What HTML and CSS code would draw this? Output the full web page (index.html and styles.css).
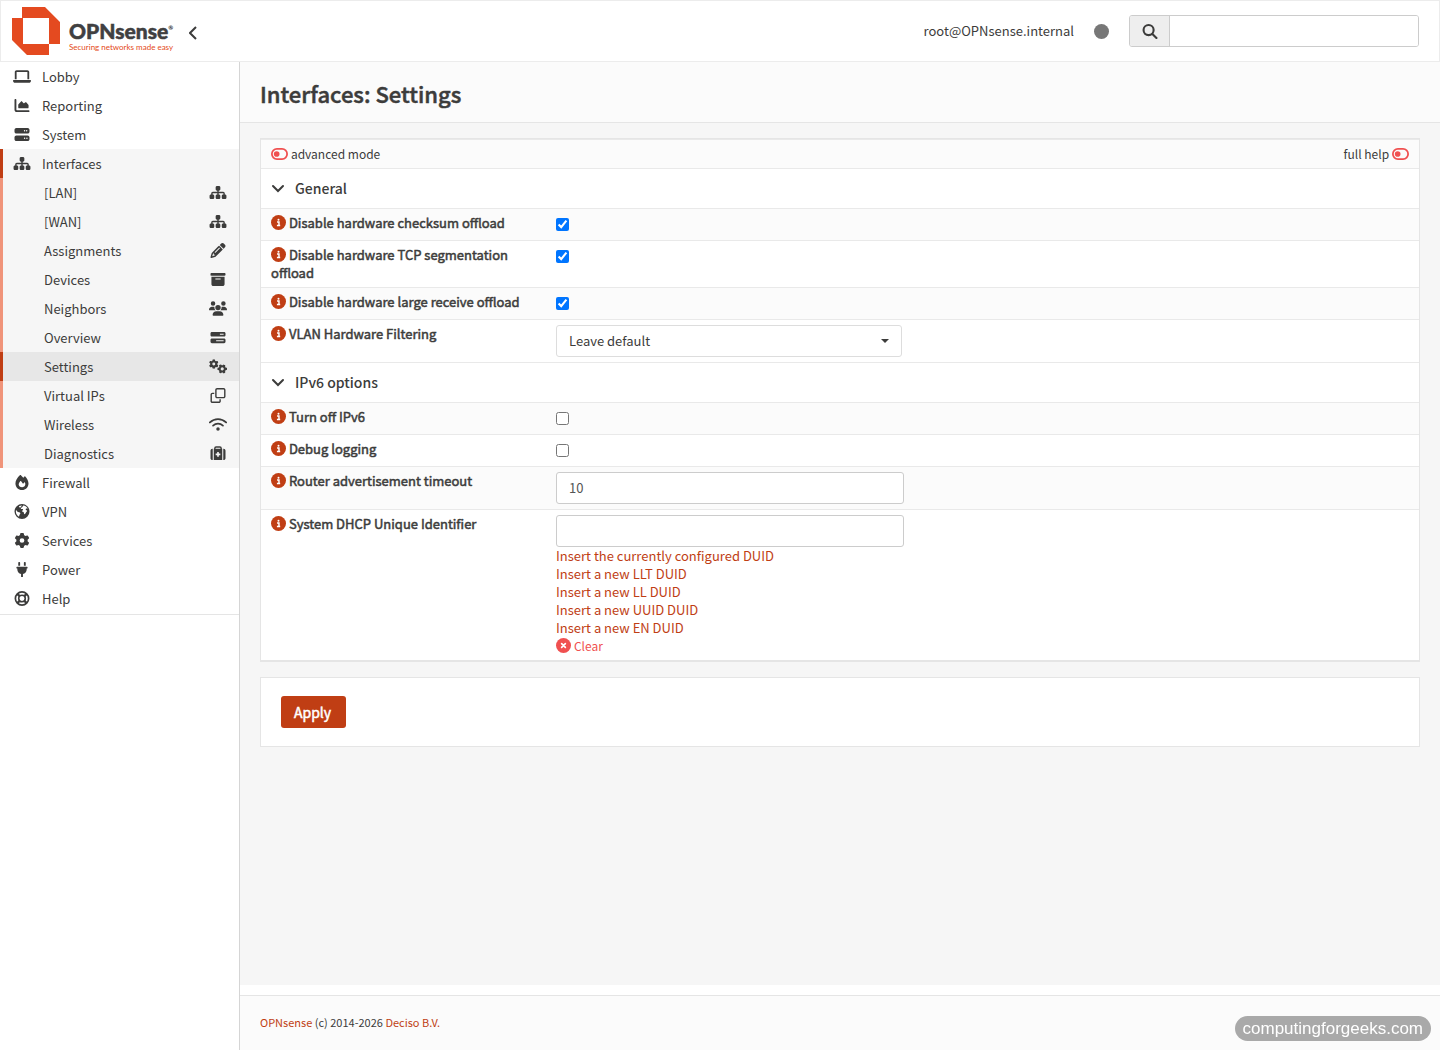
FILE: index.html
```html
<!DOCTYPE html>
<html lang="en">
<head>
    <meta charset="UTF-8">
    <meta name="viewport" content="width=device-width, initial-scale=1.0">
    <title>Settings | Interfaces | OPNsense.internal</title>
    <link rel="stylesheet" href="styles.css">
</head>
<body>
    <!-- icon set -->
    <svg class="sprite" aria-hidden="true">
        <symbol id="laptop" viewBox="0 0 640 512"><path d="M128 32C92.700 32 64 60.700 64 96V352h64V96H512V352h64V96c0-35.300-28.700-64-64-64H128zM19.200 384C8.600 384 0 392.600 0 403.200C0 445.600 34.400 480 76.800 480H563.200c42.400 0 76.800-34.400 76.800-76.800c0-10.600-8.600-19.200-19.200-19.200H19.200z"/></symbol>
        <symbol id="chart" viewBox="0 0 512 512"><path d="M64 64c0-17.700-14.300-32-32-32S0 46.300 0 64V400c0 44.200 35.800 80 80 80H480c17.700 0 32-14.300 32-32s-14.300-32-32-32H80c-8.800 0-16-7.200-16-16V64zm96 288H448c17.700 0 32-14.300 32-32V251.800c0-7.600-2.700-15-7.700-20.800l-65.800-76.800c-12.100-14.200-33.700-15-46.900-1.800l-21 21c-10 10-26.400 9.200-35.400-1.600l-39.200-47c-12.600-15.100-35.700-15.400-48.700-.6L135.900 215c-5.100 5.800-7.900 13.300-7.900 21.100v84c0 17.700 14.300 32 32 32z"/></symbol>
        <symbol id="server" viewBox="0 0 512 512"><path d="M64 32C28.700 32 0 60.700 0 96v64c0 35.300 28.700 64 64 64H448c35.300 0 64-28.700 64-64V96c0-35.300-28.700-64-64-64H64zm280 72a24 24 0 1 1 0 48 24 24 0 1 1 0-48zm48 24a24 24 0 1 1 48 0 24 24 0 1 1 -48 0zM64 288c-35.300 0-64 28.700-64 64v64c0 35.300 28.700 64 64 64H448c35.300 0 64-28.700 64-64V352c0-35.300-28.700-64-64-64H64zm280 72a24 24 0 1 1 0 48 24 24 0 1 1 0-48zm56 24a24 24 0 1 1 48 0 24 24 0 1 1 -48 0z"/></symbol>
        <symbol id="sitemap" viewBox="0 0 576 512"><path d="M208 80c0-26.500 21.500-48 48-48h64c26.500 0 48 21.500 48 48v64c0 26.500-21.500 48-48 48h-8v40H464c30.900 0 56 25.100 56 56v32h8c26.500 0 48 21.500 48 48v64c0 26.500-21.500 48-48 48H464c-26.500 0-48-21.500-48-48V368c0-26.500 21.500-48 48-48h8V288c0-4.400-3.600-8-8-8H312v40h8c26.500 0 48 21.500 48 48v64c0 26.500-21.500 48-48 48H256c-26.500 0-48-21.500-48-48V368c0-26.500 21.500-48 48-48h8V280H112c-4.400 0-8 3.600-8 8v32h8c26.500 0 48 21.500 48 48v64c0 26.500-21.500 48-48 48H48c-26.500 0-48-21.500-48-48V368c0-26.500 21.500-48 48-48h8V288c0-30.900 25.100-56 56-56H264V192h-8c-26.500 0-48-21.500-48-48V80z"/></symbol>
        <symbol id="pencil" viewBox="0 0 512 512"><path d="M410.300 231l11.300-11.300-33.900-33.900-62.100-62.100L291.700 89.800l-11.300 11.300-22.600 22.600L58.600 322.900c-10.400 10.400-18 23.300-22.200 37.400L1 480.700c-2.500 8.400-.2 17.500 6.100 23.700s15.300 8.500 23.700 6.100l120.300-35.400c14.100-4.200 27-11.800 37.400-22.200L387.700 253.700 410.300 231zM160 399.400l-9.100 22.700c-4 3.100-8.500 5.400-13.300 6.900L59.400 452l23-78.100c1.400-4.900 3.800-9.400 6.900-13.300l22.700-9.100v32c0 8.800 7.200 16 16 16h32zM362.700 18.700L348.300 33.200 325.700 55.800 314.300 67.100l33.900 33.900 62.100 62.100 33.900 33.900 11.300-11.300 22.600-22.600 14.500-14.500c25-25 25-65.500 0-90.500L453.300 18.700c-25-25-65.500-25-90.500 0zm-47.400 168l-144 144c-6.200 6.200-16.400 6.200-22.600 0s-6.200-16.400 0-22.600l144-144c6.200-6.200 16.400-6.200 22.600 0s6.200 16.400 0 22.600z"/></symbol>
        <symbol id="archive" viewBox="0 0 512 512"><path d="M32 32H480c17.700 0 32 14.300 32 32V96c0 17.700-14.300 32-32 32H32C14.300 128 0 113.700 0 96V64C0 46.300 14.300 32 32 32zm0 128H480V416c0 35.300-28.700 64-64 64H96c-35.300 0-64-28.700-64-64V160zm128 80c0 8.800 7.200 16 16 16H336c8.800 0 16-7.200 16-16s-7.200-16-16-16H176c-8.800 0-16 7.200-16 16z"/></symbol>
        <symbol id="users" viewBox="0 0 640 512"><path d="M144 0a80 80 0 1 1 0 160A80 80 0 1 1 144 0zM512 0a80 80 0 1 1 0 160A80 80 0 1 1 512 0zM0 298.700C0 239.800 47.800 192 106.700 192h42.700c15.900 0 31 3.500 44.600 9.700c-1.300 7.200-1.900 14.700-1.900 22.300c0 38.200 16.800 72.500 43.300 96H21.300C9.600 320 0 310.400 0 298.700zM404.600 320c26.600-23.500 43.300-57.800 43.300-96c0-7.600-.7-15-1.900-22.300c13.600-6.300 28.700-9.700 44.600-9.700h42.700C592.200 192 640 239.800 640 298.700c0 11.800-9.600 21.300-21.300 21.300H404.600zM224 224a96 96 0 1 1 192 0 96 96 0 1 1 -192 0zM128 485.300C128 411.700 187.700 352 261.300 352H378.700C452.300 352 512 411.700 512 485.300c0 14.700-11.900 26.700-26.700 26.700H154.700c-14.700 0-26.700-11.900-26.700-26.700z"/></symbol>
        <symbol id="progress" viewBox="0 0 512 512"><path d="M448 160H320V128H448v32zM48 64C21.500 64 0 85.500 0 112v64c0 26.500 21.500 48 48 48H464c26.500 0 48-21.500 48-48V112c0-26.500-21.500-48-48-48H48zM448 352v32H192V352H448zM48 288c-26.500 0-48 21.500-48 48v64c0 26.500 21.500 48 48 48H464c26.500 0 48-21.500 48-48V336c0-26.500-21.500-48-48-48H48z" fill-rule="evenodd"/></symbol>
        <symbol id="gear" viewBox="0 0 512 512"><path d="M495.900 166.600c3.200 8.700 .5 18.400-6.400 24.600l-43.300 39.400c1.100 8.300 1.700 16.800 1.700 25.400s-.6 17.100-1.700 25.400l43.300 39.400c6.900 6.200 9.600 15.900 6.400 24.600c-4.400 11.900-9.700 23.300-15.800 34.300l-4.700 8.100c-6.600 11-14 21.400-22.100 31.200c-5.900 7.200-15.700 9.600-24.500 6.800l-55.700-17.700c-13.400 10.300-28.200 18.900-44 25.400l-12.500 57.100c-2 9.100-9 16.300-18.200 17.800c-13.800 2.300-28 3.500-42.500 3.500s-28.700-1.200-42.500-3.500c-9.200-1.500-16.200-8.700-18.200-17.800l-12.500-57.100c-15.800-6.500-30.600-15.100-44-25.400L83.100 425.900c-8.800 2.800-18.600 .3-24.500-6.800c-8.100-9.800-15.500-20.200-22.100-31.200l-4.700-8.100c-6.100-11-11.400-22.400-15.800-34.300c-3.200-8.700-.5-18.400 6.400-24.600l43.300-39.400C64.600 273.100 64 264.600 64 256s.6-17.100 1.700-25.400L22.400 191.200c-6.900-6.200-9.600-15.900-6.400-24.600c4.400-11.900 9.700-23.300 15.800-34.300l4.700-8.100c6.600-11 14-21.400 22.100-31.200c5.900-7.200 15.700-9.600 24.500-6.800l55.700 17.700c13.400-10.300 28.200-18.900 44-25.400l12.500-57.100c2-9.100 9-16.300 18.200-17.800C227.300 1.200 241.500 0 256 0s28.700 1.200 42.500 3.500c9.200 1.500 16.200 8.700 18.200 17.800l12.500 57.100c15.800 6.500 30.600 15.100 44 25.400l55.700-17.700c8.800-2.800 18.600-.3 24.500 6.800c8.100 9.800 15.500 20.200 22.100 31.200l4.700 8.100c6.100 11 11.400 22.400 15.800 34.300zM256 336a80 80 0 1 0 0-160 80 80 0 1 0 0 160z"/></symbol>
        <symbol id="gears" viewBox="0 0 640 512"><use href="#gear" x="0" y="0" width="340" height="340"/><g transform="rotate(30 470 342)"><use href="#gear" x="300" y="172" width="340" height="340"/></g></symbol>
        <symbol id="clone" viewBox="0 0 512 512"><path d="M64 464H288c8.800 0 16-7.200 16-16V384h48v64c0 35.300-28.700 64-64 64H64c-35.300 0-64-28.700-64-64V224c0-35.300 28.700-64 64-64h64v48H64c-8.800 0-16 7.200-16 16V448c0 8.800 7.200 16 16 16zM224 304H448c8.800 0 16-7.200 16-16V64c0-8.800-7.200-16-16-16H224c-8.800 0-16 7.200-16 16V288c0 8.800 7.200 16 16 16zm-64-16V64c0-35.300 28.700-64 64-64H448c35.300 0 64 28.700 64 64V288c0 35.300-28.700 64-64 64H224c-35.300 0-64-28.700-64-64z"/></symbol>
        <symbol id="wifi" viewBox="0 0 640 512"><g fill="none" stroke="currentColor" stroke-width="62" stroke-linecap="round"><path d="M32 184c165-160 411-160 576 0"/><path d="M144 298c102-92 250-92 352 0"/></g><circle cx="320" cy="416" r="62"/></symbol>
        <symbol id="medkit" viewBox="0 0 512 512"><path d="M76 96v384H64c-36 0-64-28-64-64V160c0-36 28-64 64-64zM436 96h12c36 0 64 28 64 64v256c0 36-28 64-64 64h-12zM112 96h288v384H112zm116 112v52h-52v56h52v52h56v-52h52v-56h-52v-52z" fill-rule="evenodd"/><path d="M148 110V76c0-26 18-44 42-44h132c24 0 42 18 42 44v34" fill="none" stroke="currentColor" stroke-width="48"/></symbol>
        <symbol id="fire" viewBox="0 0 512 512"><path d="M190 4c8-7 20-7 28 1 29 28 56 58 81 91 12-15 25-32 40-46 8-7 20-7 28 0 60 58 111 158 111 238 0 126-98 224-222 224S32 414 32 287C32 200 92 92 190 4zm68 412c26 0 48-7 69-21 42-29 54-88 28-136-4-9-16-10-23-2l-26 30c-6 8-18 7-24 0-22-28-49-63-62-80-5-6-14-6-19 0-49 61-58 93-58 120 0 56 50 89 115 89z" fill-rule="evenodd"/></symbol>
        <symbol id="globe" viewBox="0 0 512 512"><path fill-rule="evenodd" d="M256 0a256 256 0 1 1 0 512 256 256 0 1 1 0-512zM54 200c-24 100 18 192 100 236l14-58c4-18 26-28 30-44 6-24-12-44-34-50l-48-12c-26-8-44-38-62-72zM256 48c-40 0-76 10-108 30l20 34c10 18 34 14 42-2l18-28c8-12 24-20 28-34zM296 52l-22 44c-8 16-26 22-40 30-20 12-22 34-6 44 20 12 44-4 60 12 16 20-12 36-24 52-10 16 4 34 24 34 26 0 32 26 34 48 4 32 26 44 44 18l26-44c12-22 36-28 36-56 0-26-38-26-46-48-6-20 14-30 34-30h36C428 98 368 58 296 52z"/></symbol>
        <symbol id="plug" viewBox="0 0 384 512"><path d="M96 0c18 0 32 14 32 32v96H64V32C64 14 78 0 96 0zm192 0c18 0 32 14 32 32v96h-64V32c0-18 14-32 32-32zM32 160h320c18 0 32 14 32 32s-14 32-32 32v32c0 77-55 142-128 157v99h-64v-99C87 398 32 333 32 256v-32c-18 0-32-14-32-32s14-32 32-32z"/></symbol>
        <symbol id="lifering" viewBox="0 0 512 512"><g fill="none" stroke="currentColor"><circle cx="256" cy="256" r="226" stroke-width="58"/><circle cx="256" cy="256" r="112" stroke-width="54"/><path d="M96 96l92 92M416 96l-92 92M96 416l92-92M416 416l-92-92" stroke-width="80"/></g></symbol>
        <symbol id="search" viewBox="0 0 512 512"><g fill="none" stroke="currentColor" stroke-width="72" stroke-linecap="round"><circle cx="208" cy="208" r="172"/><path d="M338 338l138 138"/></g></symbol>
        <symbol id="info" viewBox="0 0 512 512"><circle cx="256" cy="256" r="256"/><circle cx="256" cy="160" r="34" fill="#fff"/><path d="M206 236h66v118M202 360h112" fill="none" stroke="#fff" stroke-width="50"/></symbol>
        <symbol id="clear" viewBox="0 0 512 512"><circle cx="256" cy="256" r="256"/><path d="M192 192l128 128M320 192l-128 128" stroke="#fff" stroke-width="56" stroke-linecap="round"/></symbol>
        <symbol id="toggle" viewBox="0 0 576 400"><rect x="30" y="30" width="516" height="340" rx="170" fill="none" stroke="currentColor" stroke-width="60"/><circle cx="192" cy="200" r="96"/></symbol>
        <symbol id="chevron" viewBox="0 0 14 14"><path d="M2 4l5 5 5-5" fill="none" stroke="currentColor" stroke-width="2" stroke-linecap="round"/></symbol>
    </svg>

    <header class="page-head">
        <a class="brand" href="#">
            <svg class="brand-mark" viewBox="0 0 48 48" aria-hidden="true"><path fill="#e44a20" fill-rule="evenodd" d="M10 0h23l15 15v22H37v11H15L0 33V11h10zM11 11v26h26V11z"/></svg>
            <span class="brand-text">
                <span class="brand-name">OPNsense<sup>®</sup></span>
                <span class="brand-tagline">Securing networks made easy</span>
            </span>
        </a>
        <button class="menu-toggle" type="button" aria-label="Toggle sidebar">
            <svg viewBox="0 0 8 14"><path d="M7 1L1 7l6 6" fill="none" stroke="currentColor" stroke-width="2"/></svg>
        </button>
        <span class="user">root@OPNsense.internal</span>
        <span class="status"></span>
        <form class="search">
            <label for="search-box"><svg class="icon" aria-label="Search"><use href="#search"/></svg></label>
            <input type="text" id="search-box">
        </form>
    </header>

    <div class="page">
        <nav class="sidebar">
            <ul class="menu">
                <li><a href="#"><svg class="icon"><use href="#laptop"/></svg>Lobby</a></li>
                <li><a href="#"><svg class="icon"><use href="#chart"/></svg>Reporting</a></li>
                <li><a href="#"><svg class="icon"><use href="#server"/></svg>System</a></li>
                <li>
                    <a class="open" href="#"><svg class="icon"><use href="#sitemap"/></svg>Interfaces</a>
                    <ul class="submenu">
                        <li><a href="#">[LAN]<svg class="icon"><use href="#sitemap"/></svg></a></li>
                        <li><a href="#">[WAN]<svg class="icon"><use href="#sitemap"/></svg></a></li>
                        <li><a href="#">Assignments<svg class="icon"><use href="#pencil"/></svg></a></li>
                        <li><a href="#">Devices<svg class="icon"><use href="#archive"/></svg></a></li>
                        <li><a href="#">Neighbors<svg class="icon"><use href="#users"/></svg></a></li>
                        <li><a href="#">Overview<svg class="icon"><use href="#progress"/></svg></a></li>
                        <li><a class="active" href="#">Settings<svg class="icon"><use href="#gears"/></svg></a></li>
                        <li><a href="#">Virtual IPs<svg class="icon"><use href="#clone"/></svg></a></li>
                        <li><a href="#">Wireless<svg class="icon"><use href="#wifi"/></svg></a></li>
                        <li><a href="#">Diagnostics<svg class="icon"><use href="#medkit"/></svg></a></li>
                    </ul>
                </li>
                <li><a href="#"><svg class="icon"><use href="#fire"/></svg>Firewall</a></li>
                <li><a href="#"><svg class="icon"><use href="#globe"/></svg>VPN</a></li>
                <li><a href="#"><svg class="icon"><use href="#gear"/></svg>Services</a></li>
                <li><a href="#"><svg class="icon"><use href="#plug"/></svg>Power</a></li>
                <li><a href="#"><svg class="icon"><use href="#lifering"/></svg>Help</a></li>
            </ul>
        </nav>

        <div class="main">
            <div class="title-bar">
                <h1>Interfaces: Settings</h1>
            </div>

            <main class="content">
                <form>
                    <div class="box">
                        <table class="settings">
                            <tr class="modes">
                                <td><a href="#"><svg class="icon"><use href="#toggle"/></svg></a> <small>advanced mode</small></td>
                                <td class="right"><small>full help</small> <a href="#"><svg class="icon"><use href="#toggle"/></svg></a></td>
                            </tr>
                            <tr class="section">
                                <th colspan="2"><svg class="chevron"><use href="#chevron"/></svg>General</th>
                            </tr>
                            <tr class="odd">
                                <td><svg class="info"><use href="#info"/></svg> <label for="checksum">Disable hardware checksum offload</label></td>
                                <td><input type="checkbox" id="checksum" checked></td>
                            </tr>
                            <tr>
                                <td><svg class="info"><use href="#info"/></svg> <label for="tso">Disable hardware TCP segmentation offload</label></td>
                                <td><input type="checkbox" id="tso" checked></td>
                            </tr>
                            <tr class="odd">
                                <td><svg class="info"><use href="#info"/></svg> <label for="lro">Disable hardware large receive offload</label></td>
                                <td><input type="checkbox" id="lro" checked></td>
                            </tr>
                            <tr>
                                <td><svg class="info"><use href="#info"/></svg> <label for="vlan">VLAN Hardware Filtering</label></td>
                                <td>
                                    <div class="select">
                                        <select id="vlan">
                                            <option>Leave default</option>
                                        </select>
                                    </div>
                                </td>
                            </tr>
                            <tr class="section">
                                <th colspan="2"><svg class="chevron"><use href="#chevron"/></svg>IPv6 options</th>
                            </tr>
                            <tr class="odd">
                                <td><svg class="info"><use href="#info"/></svg> <label for="ipv6">Turn off IPv6</label></td>
                                <td><input type="checkbox" id="ipv6"></td>
                            </tr>
                            <tr>
                                <td><svg class="info"><use href="#info"/></svg> <label for="debug">Debug logging</label></td>
                                <td><input type="checkbox" id="debug"></td>
                            </tr>
                            <tr class="odd">
                                <td><svg class="info"><use href="#info"/></svg> <label for="timeout">Router advertisement timeout</label></td>
                                <td><input type="text" id="timeout" value="10"></td>
                            </tr>
                            <tr>
                                <td><svg class="info"><use href="#info"/></svg> <label for="duid">System DHCP Unique Identifier</label></td>
                                <td>
                                    <input type="text" id="duid">
                                    <a class="duid-link" href="#">Insert the currently configured DUID</a>
                                    <a class="duid-link" href="#">Insert a new LLT DUID</a>
                                    <a class="duid-link" href="#">Insert a new LL DUID</a>
                                    <a class="duid-link" href="#">Insert a new UUID DUID</a>
                                    <a class="duid-link" href="#">Insert a new EN DUID</a>
                                    <a class="clear" href="#"><svg class="info"><use href="#clear"/></svg> <small>Clear</small></a>
                                </td>
                            </tr>
                        </table>
                    </div>

                    <div class="box actions">
                        <button class="apply" type="submit">Apply</button>
                    </div>
                </form>
            </main>

            <footer class="page-foot">
                <a href="#">OPNsense</a> (c) 2014-2026 <a href="#">Deciso B.V.</a>
            </footer>
        </div>
    </div>

    <div class="site-badge">computingforgeeks.com</div>
</body>
</html>
```

FILE: styles.css
```css
* {
    box-sizing: border-box;
}

body {
    display: flex;
    flex-direction: column;
    min-height: 100vh;
    margin: 0;
    font-family: "Noto Sans CJK SC", "Noto Sans", sans-serif;
    font-size: 13px;
    line-height: 18px;
    color: #3c3c3b;
    background-color: #fff;
}

a {
    color: #c03e14;
    text-decoration: none;
}

small {
    font-size: 12px;
}

input, select, button {
    font-family: inherit;
    font-size: 13px;
    color: inherit;
}

.sprite {
    position: absolute;
    width: 0;
    height: 0;
}

.icon {
    width: 18px;
    height: 15px;
    fill: currentColor;
}

/* header */
.page-head {
    display: flex;
    align-items: center;
    height: 62px;
    padding: 0 20px 0 11px;
    border: 1px solid #ececec;
}

.brand {
    display: flex;
    align-items: center;
    gap: 9px;
}

.brand-mark {
    width: 48px;
    height: 48px;
}

.brand-text {
    display: flex;
    flex-direction: column;
    gap: 2px;
    padding-top: 10px;
    font-family: Lato, sans-serif;
}

.brand-name {
    font-size: 21px;
    line-height: 20px;
    font-weight: 900;
    color: #404041;
    -webkit-text-stroke: 0.5px currentColor;
}

.brand-name sup {
    font-size: 6px;
    line-height: 0;
    vertical-align: 9px;
    -webkit-text-stroke: 0;
}

.brand-tagline {
    font-size: 8px;
    line-height: 8px;
    color: #e44a20;
}

.menu-toggle {
    display: flex;
    margin: 4px auto 0 16px;
    padding: 0;
    border: none;
    background: none;
    cursor: pointer;
}

.menu-toggle svg {
    width: 8px;
    height: 14px;
}

.status {
    width: 15px;
    height: 15px;
    margin: 0 20px;
    border-radius: 50%;
    background-color: #777;
}

.search {
    display: flex;
    width: 290px;
    height: 32px;
    border: 1px solid #ccc;
    border-radius: 3px;
    overflow: hidden;
}

.search label {
    display: flex;
    align-items: center;
    justify-content: center;
    width: 40px;
    border-right: 1px solid #ccc;
    background-color: #eee;
}

.search input {
    flex: 1;
    min-width: 0;
    border: none;
    outline: none;
}

/* sidebar */
.page {
    display: flex;
    flex: 1;
}

.sidebar {
    flex: 0 0 240px;
    border-right: 1px solid #d5d5d5;
}

.menu, .submenu {
    margin: 0;
    padding: 0;
    list-style: none;
}

.menu {
    padding-bottom: 1px;
    border-bottom: 1px solid #e5e5e5;
}

.menu a {
    display: flex;
    align-items: center;
    height: 29px;
    padding-left: 13px;
    color: #3c3c3b;
}

.menu .icon {
    margin-right: 11px;
}

.menu .open {
    padding-left: 10px;
    border-left: 3px solid #c03e14;
    background-color: #f6f6f6;
}

.submenu a {
    justify-content: space-between;
    padding-left: 41px;
    border-left: 3px solid #f0947a;
    background-color: #f6f6f6;
}

.submenu .active {
    border-left-color: #c03e14;
    background-color: #e7e7e7;
}

.submenu .icon {
    margin-right: 12px;
}

/* content */
.main {
    display: flex;
    flex: 1;
    flex-direction: column;
    min-width: 0;
}

.title-bar {
    padding: 19px 20px 17px;
    border-bottom: 1px solid #e5e5e5;
    background-color: #fbfbfb;
}

h1 {
    margin: 0;
    font-size: 22px;
    line-height: 24px;
    font-weight: 500;
    -webkit-text-stroke: 0.5px currentColor;
}

.content {
    flex: 1;
    padding: 15px 20px;
    background-color: #f6f6f6;
}

.box {
    margin-bottom: 15px;
    border: 1px solid #e5e5e5;
    background-color: #fff;
}

.settings {
    width: 100%;
    border-collapse: separate;
    border-spacing: 0;
    table-layout: fixed;
    border-bottom: 1px solid #e5e5e5;
}

.settings td, .settings th {
    padding: 5px 10px;
    border-top: 1px solid #e9e9e9;
    text-align: left;
    vertical-align: top;
}

.settings td:first-child {
    width: 285px;
}

.settings tr {
    height: 32px;
}

.settings .modes {
    height: 29px;
}

.odd, .modes {
    background-color: #fbfbfb;
}

.settings .right {
    text-align: right;
}

.modes a {
    color: #f05050;
}

.modes .icon {
    width: 17px;
    height: 12px;
    vertical-align: -1px;
}

.settings .section th {
    padding: 10px;
    font-size: 14px;
    font-weight: 500;
    line-height: 19px;
}

.chevron {
    width: 14px;
    height: 14px;
    margin-right: 10px;
    vertical-align: -2px;
}

.info {
    width: 15px;
    height: 15px;
    vertical-align: -2px;
    fill: #c03e14;
}

/* regular weight thickened, keeps its width */
.settings label {
    -webkit-text-stroke: 0.5px currentColor;
}

input[type="checkbox"] {
    display: block;
    width: 13px;
    height: 13px;
    margin: 4px 0 0;
}

.settings input[type="text"] {
    display: block;
    width: 348px;
    height: 32px;
    padding: 5px 12px 7px;
    border: 1px solid #ccc;
    border-radius: 3px;
    color: #555;
}

.select {
    position: relative;
    width: 346px;
}

.select select {
    display: block;
    width: 100%;
    height: 32px;
    padding: 0 12px 2px;
    border: 1px solid #ddd;
    border-radius: 3px;
    background-color: #fff;
    appearance: none;
}

.select::after {
    content: "";
    position: absolute;
    top: 14px;
    right: 13px;
    border: 4px solid transparent;
    border-top-color: #3c3c3b;
    border-bottom: none;
    pointer-events: none;
}

.duid-link, .clear {
    display: block;
}

.clear {
    color: #f05050;
}

.clear .info {
    fill: #f05050;
}

.actions {
    margin-bottom: 0;
    padding: 18px 20px;
}

.apply {
    display: block;
    height: 32px;
    padding: 0 15px 0 13px;
    border: none;
    border-radius: 3px;
    font-size: 14px;
    color: #fff;
    background-color: #c03e14;
    -webkit-text-stroke: 0.5px currentColor;
    cursor: pointer;
}

.page-foot {
    height: 55px;
    margin-top: 10px;
    padding: 17px 20px;
    border-top: 1px solid #e5e5e5;
    background-color: #fbfbfb;
    font-size: 11px;
}

.site-badge {
    position: fixed;
    right: 9px;
    bottom: 9px;
    padding: 0 8px;
    border-radius: 13px;
    font-family: "Liberation Sans", Arial, sans-serif;
    font-size: 17px;
    line-height: 25px;
    color: #fff;
    background-color: #a9a9a9;
}
```
